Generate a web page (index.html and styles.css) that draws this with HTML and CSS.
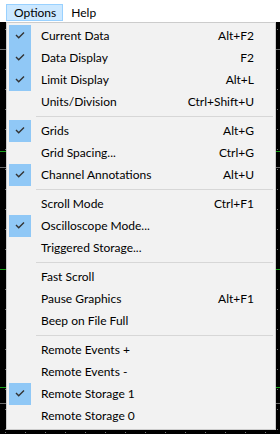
FILE: index.html
```html
<!DOCTYPE html>
<html lang="en">
<head>
    <meta charset="UTF-8">
    <meta name="viewport" content="width=device-width, initial-scale=1.0">
    <title>Options Menu</title>
    <link rel="stylesheet" href="styles.css">
</head>
<body>
    <!-- Menu bar -->
    <div class="menubar">
        <span class="menubar-item open">Options</span>
        <span class="menubar-item">Help</span>
    </div>

    <!-- Scope display behind the menu -->
    <div class="scope"></div>

    <!-- Options dropdown -->
    <ul class="dropdown">
        <li class="item checked"><span class="check"><svg viewBox="0 0 22 22"><path d="M7 10 L9.7 12.7 L15 7.4"/></svg></span><span class="label">Current Data</span><span class="key">Alt+F2</span></li>
        <li class="item checked"><span class="check"><svg viewBox="0 0 22 22"><path d="M7 10 L9.7 12.7 L15 7.4"/></svg></span><span class="label">Data Display</span><span class="key">F2</span></li>
        <li class="item checked"><span class="check"><svg viewBox="0 0 22 22"><path d="M7 10 L9.7 12.7 L15 7.4"/></svg></span><span class="label">Limit Display</span><span class="key">Alt+L</span></li>
        <li class="item"><span class="check"></span><span class="label">Units/Division</span><span class="key">Ctrl+Shift+U</span></li>
        <li class="sep"></li>
        <li class="item checked"><span class="check"><svg viewBox="0 0 22 22"><path d="M7 10 L9.7 12.7 L15 7.4"/></svg></span><span class="label">Grids</span><span class="key">Alt+G</span></li>
        <li class="item"><span class="check"></span><span class="label">Grid Spacing...</span><span class="key">Ctrl+G</span></li>
        <li class="item checked"><span class="check"><svg viewBox="0 0 22 22"><path d="M7 10 L9.7 12.7 L15 7.4"/></svg></span><span class="label">Channel Annotations</span><span class="key">Alt+U</span></li>
        <li class="sep"></li>
        <li class="item"><span class="check"></span><span class="label">Scroll Mode</span><span class="key">Ctrl+F1</span></li>
        <li class="item checked"><span class="check"><svg viewBox="0 0 22 22"><path d="M7 10 L9.7 12.7 L15 7.4"/></svg></span><span class="label">Oscilloscope Mode...</span><span class="key"></span></li>
        <li class="item"><span class="check"></span><span class="label">Triggered Storage...</span><span class="key"></span></li>
        <li class="sep"></li>
        <li class="item"><span class="check"></span><span class="label">Fast Scroll</span><span class="key"></span></li>
        <li class="item"><span class="check"></span><span class="label">Pause Graphics</span><span class="key">Alt+F1</span></li>
        <li class="item"><span class="check"></span><span class="label">Beep on File Full</span><span class="key"></span></li>
        <li class="sep"></li>
        <li class="item"><span class="check"></span><span class="label">Remote Events +</span><span class="key"></span></li>
        <li class="item"><span class="check"></span><span class="label">Remote Events -</span><span class="key"></span></li>
        <li class="item checked"><span class="check"><svg viewBox="0 0 22 22"><path d="M7 10 L9.7 12.7 L15 7.4"/></svg></span><span class="label">Remote Storage 1</span><span class="key"></span></li>
        <li class="item"><span class="check"></span><span class="label">Remote Storage 0</span><span class="key"></span></li>
    </ul>
</body>
</html>
```

FILE: styles.css
```css
body {
    margin: 0;
    height: 434px;
    background-color: #000;
    font-family: 'Lato', 'Noto Sans', sans-serif;
    font-size: 12px;
    color: #000;
    overflow: hidden;
    position: relative;
}
/* Menu bar */
.menubar {
    height: 22px;
    background-color: #fff;
    display: flex;
    align-items: center;
    padding-left: 6px;
    box-sizing: border-box;
}
.menubar-item {
    height: 17px;
    line-height: 15px;
    padding: 0 6px 0 7px;
    border: 1px solid transparent;
    box-sizing: border-box;
    margin-top: 3px;
}
.menubar-item.open {
    background-color: #cce8ff;
    border-color: #99d1ff;
}
/* Scope grid in the background */
.scope {
    height: 412px;
    background:
        linear-gradient(#18a018, #18a018) 0 129px / 100% 1px no-repeat,
        linear-gradient(#18a018, #18a018) 0 247px / 100% 1px no-repeat,
        linear-gradient(#18a018, #18a018) 0 365px / 100% 1px no-repeat,
        linear-gradient(#6a6a6a, #6a6a6a) 0 27px / 100% 1px no-repeat,
        linear-gradient(#6a6a6a, #6a6a6a) 0 145px / 100% 1px no-repeat,
        linear-gradient(#6a6a6a, #6a6a6a) 0 381px / 100% 1px no-repeat,
        repeating-linear-gradient(#777 0 1px, transparent 1px 20px) 5px 7px / 1px 100% no-repeat,
        repeating-linear-gradient(#777 0 1px, transparent 1px 20px) 277px 7px / 1px 100% no-repeat,
        repeating-linear-gradient(to right, #777 0 1px, transparent 1px 20px) 5px 410px / 100% 1px no-repeat,
        #000;
}
/* Dropdown */
.dropdown {
    position: absolute;
    top: 22px;
    left: 6px;
    width: 270px;
    margin: 0;
    padding: 2px;
    list-style: none;
    box-sizing: border-box;
    background-color: #f2f2f2;
    border: 1px solid #cccccc;
}
.item {
    display: flex;
    align-items: center;
    height: 22px;
    padding-right: 19px;
}
.check {
    width: 22px;
    height: 22px;
    flex-shrink: 0;
    margin-right: 10px;
}
.item.checked .check {
    background-color: #90c8f6;
}
.check svg {
    display: block;
    width: 22px;
    height: 22px;
    fill: none;
    stroke: #333;
    stroke-width: 1.4;
}
.label {
    flex: 1;
    white-space: nowrap;
    padding-bottom: 1px;
}
.key {
    white-space: nowrap;
    padding-bottom: 1px;
}
.sep {
    height: 7px;
    margin-left: 27px;
    background: linear-gradient(#d7d7d7, #d7d7d7) 0 3px / 100% 1px no-repeat;
}
```
